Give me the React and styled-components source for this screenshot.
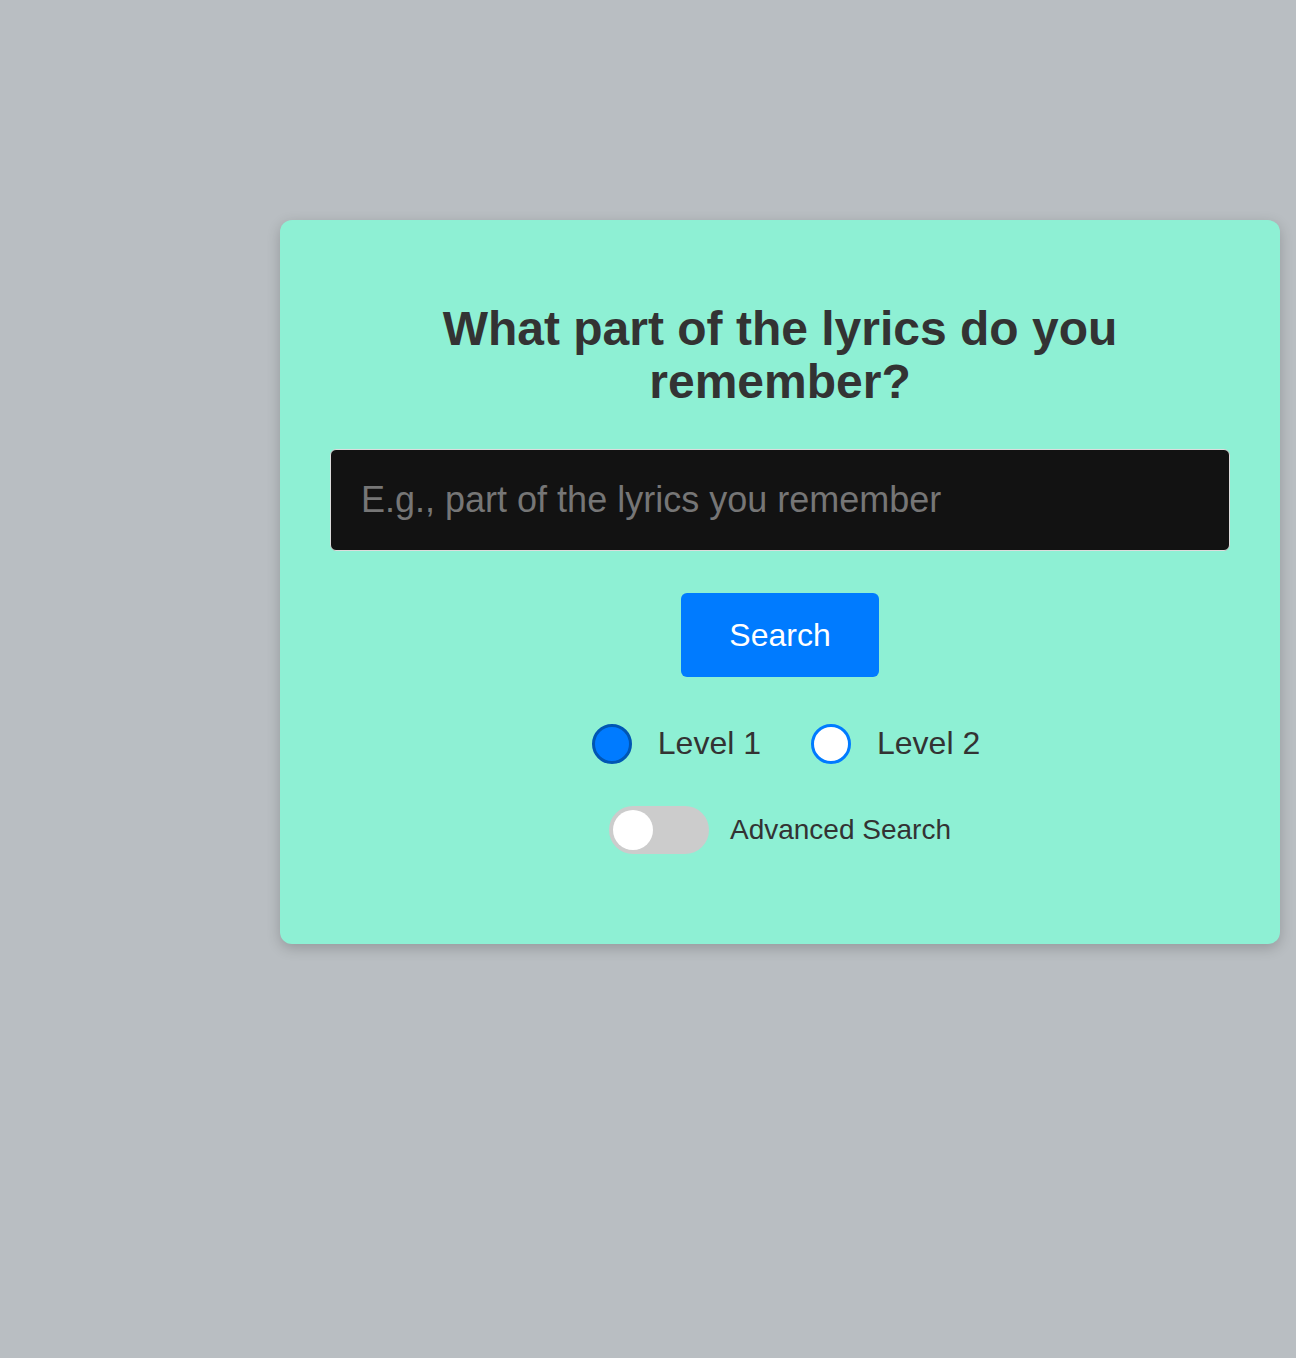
import React, { useState } from "react";
import styled, { createGlobalStyle } from "styled-components";

const GlobalStyle = createGlobalStyle`
  html, body {
    margin: 0;
    padding: 0;
    background: #b9bec2;
    font-family: "Liberation Sans", Arial, Helvetica, sans-serif;
  }
  * { box-sizing: border-box; }
`;

const Page = styled.div`
  min-height: 1358px;
  padding: 220px 0 0 280px;
`;

const Card = styled.div`
  width: 1000px;
  background: #8ef0d4;
  border-radius: 12px;
  box-shadow: 0 4px 14px rgba(0, 0, 0, 0.2);
  padding: 83px 50px 90px;
  display: flex;
  flex-direction: column;
  align-items: center;
`;

const Title = styled.h2`
  margin: 0;
  font-size: 48px;
  line-height: 1.1;
  font-weight: 700;
  color: #333;
  text-align: center;
`;

const LyricsInput = styled.input`
  margin-top: 40px;
  width: 100%;
  height: 102px;
  padding: 0 30px;
  background: #121212;
  border: 1px solid #dcdcdc;
  border-radius: 6px;
  color: #eee;
  font-family: inherit;
  font-size: 36px;
  outline: none;
  &::placeholder {
    color: #767676;
  }
`;

const SearchButton = styled.button`
  margin-top: 42px;
  padding: 23px 48px;
  background: #007bff;
  color: #fff;
  border: none;
  border-radius: 6px;
  font-family: inherit;
  font-size: 32px;
  line-height: 38px;
  cursor: pointer;
`;

const RadioRow = styled.div`
  margin-top: 47px;
  display: flex;
  align-items: center;
  justify-content: center;
  gap: 50px;
  padding-left: 12px;
`;

const Option = styled.label`
  display: flex;
  align-items: center;
  gap: 26px;
  font-size: 32px;
  color: #333;
  cursor: pointer;
`;

const Radio = styled.input.attrs({ type: "radio" })`
  appearance: none;
  -webkit-appearance: none;
  margin: 0;
  width: 40px;
  height: 40px;
  border-radius: 50%;
  border: 3px solid #007bff;
  background: #fff;
  cursor: pointer;
  &:checked {
    background: #007bff;
    border-color: #0056b3;
  }
`;

const ToggleRow = styled.label`
  margin-top: 42px;
  display: flex;
  align-items: center;
  gap: 21px;
  font-size: 28px;
  color: #333;
  cursor: pointer;
`;

const Track = styled.span`
  position: relative;
  width: 100px;
  height: 48px;
  border-radius: 24px;
  background: ${(p) => (p.$on ? "#007bff" : "#ccc")};
  flex-shrink: 0;
`;

const Knob = styled.span`
  position: absolute;
  top: 4px;
  left: ${(p) => (p.$on ? "56px" : "4px")};
  width: 40px;
  height: 40px;
  border-radius: 50%;
  background: #fff;
`;

const HiddenCheck = styled.input`
  display: none;
`;

export default function App() {
  const [level, setLevel] = useState("1");
  const [adv, setAdv] = useState(false);
  return (
    <>
      <GlobalStyle />
      <Page>
        <Card>
          <Title>What part of the lyrics do you remember?</Title>
          <LyricsInput placeholder="E.g., part of the lyrics you remember" />
          <SearchButton>Search</SearchButton>
          <RadioRow>
            <Option>
              <Radio name="level" checked={level === "1"} onChange={() => setLevel("1")} />
              Level 1
            </Option>
            <Option>
              <Radio name="level" checked={level === "2"} onChange={() => setLevel("2")} />
              Level 2
            </Option>
          </RadioRow>
          <ToggleRow>
            <HiddenCheck type="checkbox" checked={adv} onChange={() => setAdv(!adv)} />
            <Track $on={adv}>
              <Knob $on={adv} />
            </Track>
            Advanced Search
          </ToggleRow>
        </Card>
      </Page>
    </>
  );
}
